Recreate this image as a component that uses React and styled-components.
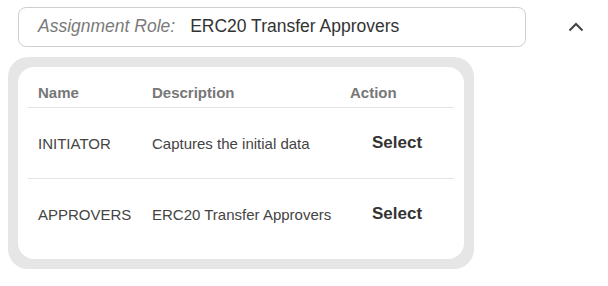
import React from 'react';
import styled, { createGlobalStyle } from 'styled-components';

const GlobalStyle = createGlobalStyle`
  body {
    margin: 0;
    background: #ffffff;
    font-family: "Liberation Sans", Arial, sans-serif;
  }
`;

const Page = styled.div`
  width: 608px;
  height: 286px;
  padding: 7px 0 0 8px;
  box-sizing: border-box;
`;

const TopRow = styled.div`
  display: flex;
  align-items: center;
  height: 40px;
`;

const RoleField = styled.div`
  display: flex;
  align-items: center;
  box-sizing: border-box;
  width: 508px;
  height: 40px;
  margin-left: 10px;
  padding: 0 0 1px 19px;
  border: 1px solid #cfcfcf;
  border-radius: 8px;
  font-size: 17.5px;
`;

const RoleLabel = styled.span`
  font-style: italic;
  color: #7a7a7a;
  margin-right: 15px;
`;

const RoleValue = styled.span`
  color: #333333;
`;

const ToggleButton = styled.button`
  display: flex;
  align-items: center;
  justify-content: center;
  margin-left: 42px;
  padding: 0;
  width: 16px;
  height: 16px;
  background: none;
  border: none;
`;

const Panel = styled.div`
  margin-top: 10px;
  width: 466px;
  box-sizing: border-box;
  padding: 10px;
  background: #e6e6e6;
  border-radius: 20px;
`;

const Card = styled.div`
  background: #ffffff;
  border-radius: 16px;
  padding: 10px;
`;

const Table = styled.table`
  width: 426px;
  border-collapse: collapse;
  table-layout: fixed;
`;

const HeadCell = styled.th`
  height: 30px;
  padding: 0 10px;
  text-align: left;
  font-size: 15px;
  font-weight: bold;
  color: #777777;
  border-bottom: 1px solid #e4e4e4;
  width: ${p => p.$w - 20}px;
`;

const Row = styled.tr`
  & + & td {
    border-top: 1px solid #e4e4e4;
  }
`;

const Cell = styled.td`
  height: 70px;
  padding: 0 10px;
  font-size: 15px;
  color: #444444;
  white-space: nowrap;
  text-align: ${p => (p.$center ? 'center' : 'left')};
`;

const SelectButton = styled.button`
  background: none;
  border: none;
  padding: 0;
  font-family: "Liberation Sans", Arial, sans-serif;
  font-size: 17px;
  font-weight: bold;
  color: #333333;
  cursor: pointer;
`;

const roles = [
  { name: 'INITIATOR', description: 'Captures the initial data' },
  { name: 'APPROVERS', description: 'ERC20 Transfer Approvers' },
];

const ChevronUp = () => (
  <svg width="16" height="10" viewBox="0 0 16 10">
    <path d="M1.5 8.5 L8 2 L14.5 8.5" fill="none" stroke="#444" strokeWidth="2" />
  </svg>
);

const App = () => (
  <Page>
    <GlobalStyle />
    <TopRow>
      <RoleField>
        <RoleLabel>Assignment Role:</RoleLabel>
        <RoleValue>ERC20 Transfer Approvers</RoleValue>
      </RoleField>
      <ToggleButton>
        <ChevronUp />
      </ToggleButton>
    </TopRow>
    <Panel>
      <Card>
        <Table>
          <thead>
            <tr>
              <HeadCell $w={114}>Name</HeadCell>
              <HeadCell $w={198}>Description</HeadCell>
              <HeadCell $w={114}>Action</HeadCell>
            </tr>
          </thead>
          <tbody>
            {roles.map(role => (
              <Row key={role.name}>
                <Cell>{role.name}</Cell>
                <Cell>{role.description}</Cell>
                <Cell $center>
                  <SelectButton>Select</SelectButton>
                </Cell>
              </Row>
            ))}
          </tbody>
        </Table>
      </Card>
    </Panel>
  </Page>
);

export default App;
